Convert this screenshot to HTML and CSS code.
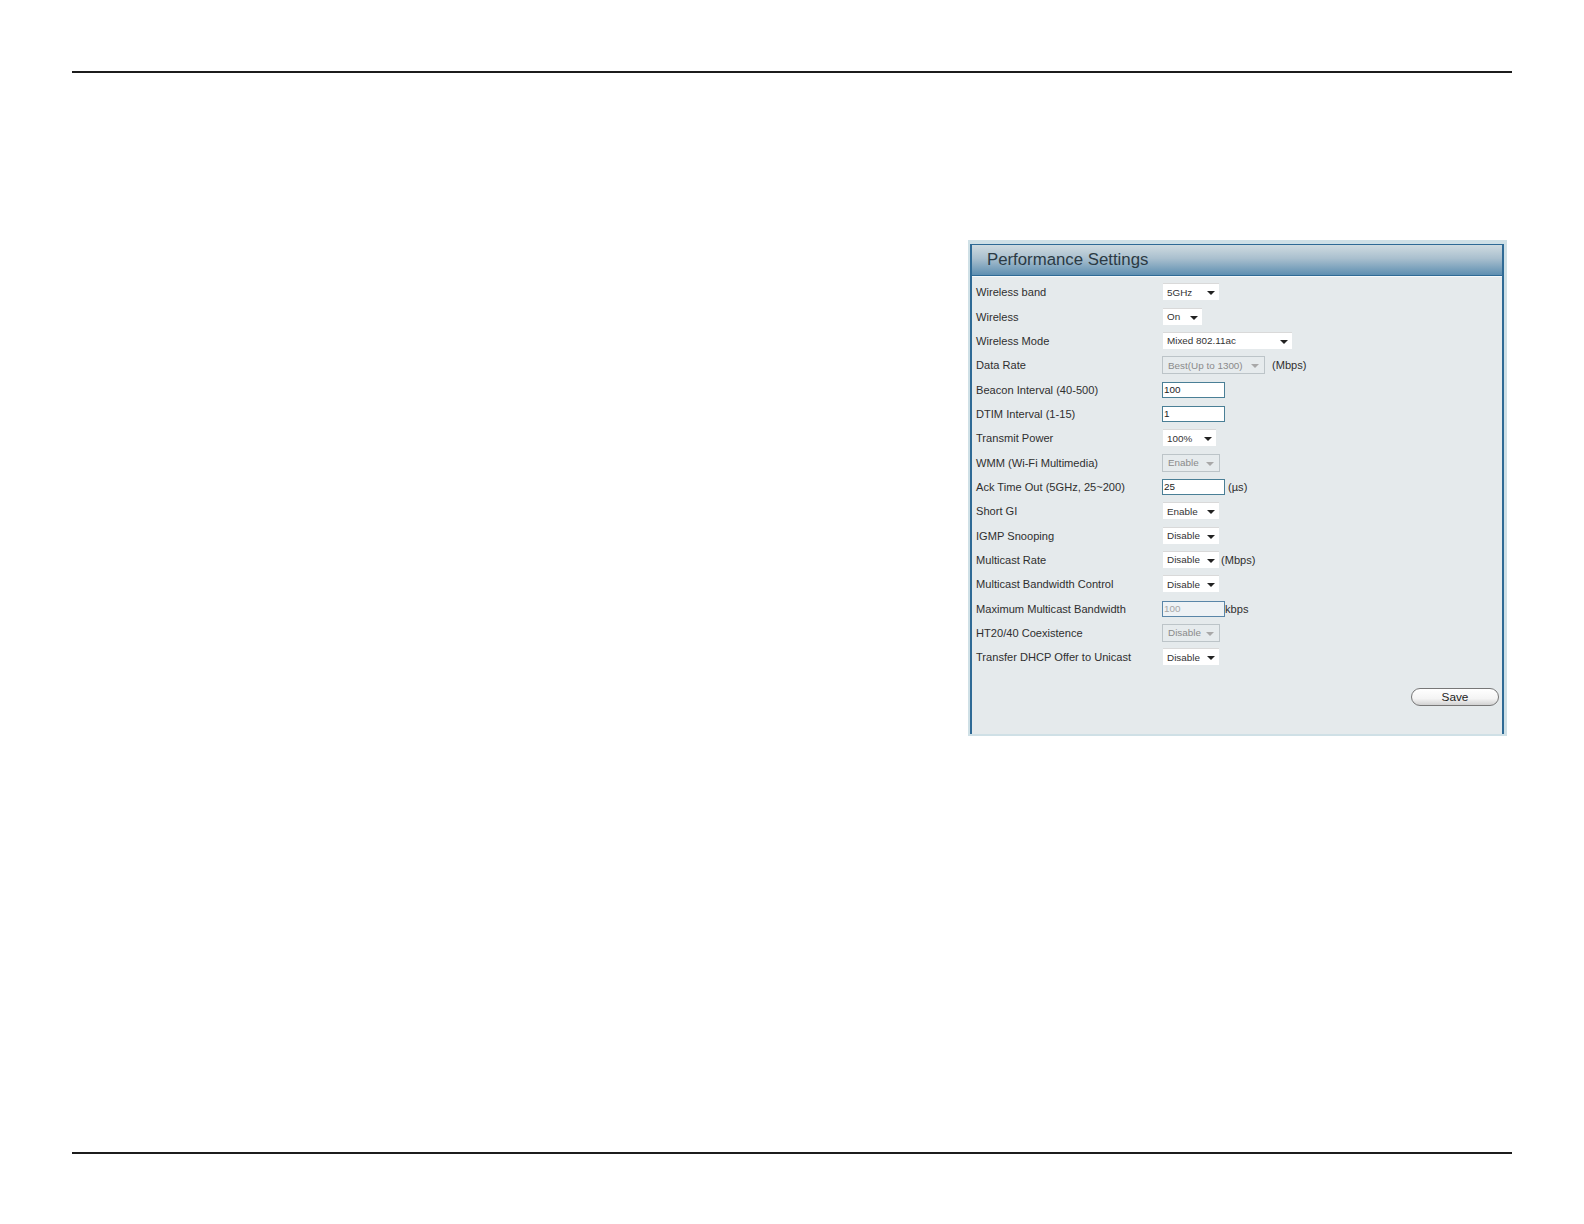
FILE: index.html
```html
<!DOCTYPE html>
<html lang="en">
<head>
<meta charset="utf-8">
<title>Performance Settings</title>
<link rel="stylesheet" href="styles.css">
</head>
<body>
<div class="page">
  <hr class="rule">
  <main class="content">
    <section class="panel">
      <div class="panel-inner">
        <h1 class="title">Performance Settings</h1>
        <div class="form">
          <div class="row"><span class="label">Wireless band</span><div class="field"><span class="select w57"><span class="val">5GHz</span><i class="arrow"></i></span></div></div>
          <div class="row"><span class="label">Wireless</span><div class="field"><span class="select w40"><span class="val">On</span><i class="arrow"></i></span></div></div>
          <div class="row"><span class="label">Wireless Mode</span><div class="field"><span class="select w130"><span class="val">Mixed 802.11ac</span><i class="arrow"></i></span></div></div>
          <div class="row"><span class="label">Data Rate</span><div class="field"><span class="select off w103"><span class="val">Best(Up to 1300)</span><i class="arrow"></i></span><span class="unit gap6">(Mbps)</span></div></div>
          <div class="row"><span class="label">Beacon Interval (40-500)</span><div class="field"><span class="input">100</span></div></div>
          <div class="row"><span class="label">DTIM Interval (1-15)</span><div class="field"><span class="input">1</span></div></div>
          <div class="row"><span class="label">Transmit Power</span><div class="field"><span class="select w54"><span class="val">100%</span><i class="arrow"></i></span></div></div>
          <div class="row"><span class="label">WMM (Wi-Fi Multimedia)</span><div class="field"><span class="select off w58"><span class="val">Enable</span><i class="arrow"></i></span></div></div>
          <div class="row"><span class="label">Ack Time Out (5GHz, 25~200)</span><div class="field"><span class="input">25</span><span class="unit gap3">(µs)</span></div></div>
          <div class="row"><span class="label">Short GI</span><div class="field"><span class="select w57"><span class="val">Enable</span><i class="arrow"></i></span></div></div>
          <div class="row"><span class="label">IGMP Snooping</span><div class="field"><span class="select w57"><span class="val">Disable</span><i class="arrow"></i></span></div></div>
          <div class="row"><span class="label">Multicast Rate</span><div class="field"><span class="select w57"><span class="val">Disable</span><i class="arrow"></i></span><span class="unit gap1">(Mbps)</span></div></div>
          <div class="row"><span class="label">Multicast Bandwidth Control</span><div class="field"><span class="select w57"><span class="val">Disable</span><i class="arrow"></i></span></div></div>
          <div class="row"><span class="label">Maximum Multicast Bandwidth</span><div class="field"><span class="input dim">100</span><span class="unit">kbps</span></div></div>
          <div class="row"><span class="label">HT20/40 Coexistence</span><div class="field"><span class="select off w58"><span class="val">Disable</span><i class="arrow"></i></span></div></div>
          <div class="row"><span class="label">Transfer DHCP Offer to Unicast</span><div class="field"><span class="select w57"><span class="val">Disable</span><i class="arrow"></i></span></div></div>
        </div>
        <div class="actions"><button class="save" type="button">Save</button></div>
      </div>
    </section>
  </main>
  <hr class="rule">
</div>
</body>
</html>
```
FILE: styles.css
```css
* { box-sizing: border-box; }
html, body { margin: 0; background: #fff; }
body { font-family: "Liberation Sans", Arial, sans-serif; color: #2f2f2f; }
.page { width: 1584px; height: 1224px; padding: 71px 72px 0 72px; }
.rule { margin: 0; height: 2px; border: 0; background: #1c1c1c; }
.content { height: 1079px; padding: 167px 5px 0 896px; }
.panel { width: 539px; height: 496px; background: #cfe0e6; padding: 4px 3px 2px 2px; }
.panel-inner {
  height: 100%;
  background: #e5eaec;
  border: 1px solid #2f6a95;
  border-width: 1px 2px 0 2px;
  display: flex;
  flex-direction: column;
}
.title {
  margin: 0;
  flex: none;
  height: 31px;
  padding: 4px 0 0 15px;
  font-size: 16.8px;
  line-height: 22px;
  font-weight: 400;
  color: #2b3a44;
  background: linear-gradient(#cfdbe0, #a9bfce 45%, #5e8fb1);
  border-bottom: 1px solid #2f6a95;
  box-shadow: 0 1px 0 #f4f8fa;
}
.form { padding: 4px 0 0 4px; display: grid; grid-auto-rows: 24.35px; }
.row { display: flex; align-items: center; font-size: 11.1px; }
.label { width: 187px; flex: none; }
.field { display: flex; align-items: center; }
.select {
  height: 17px;
  margin-bottom: 1px;
  display: flex;
  align-items: center;
  justify-content: space-between;
  background: #fff;
  padding: 0 4px 0 4px;
  font-size: 9.9px;
  color: #333;
  border-top: 1px solid #d9d9d9;
}
.select.off {
  height: 18px;
  margin-left: -1px;
  margin-bottom: 0;
  background: #e6ebed;
  border: 1px solid #bcc4c8;
  color: #8a8a8a;
  padding: 0 5px 0 5px;
}
.w40 { width: 39px; } .w54 { width: 53px; } .w57 { width: 56px; } .w58 { width: 58px; }
.w103 { width: 103px; } .w130 { width: 129px; }
.arrow {
  width: 0; height: 0;
  border: 4px solid transparent;
  border-top: 4px solid #222;
  border-bottom: 0;
  margin-top: 2px;
}
.off .arrow { border-top-color: #a8a8a8; }
.input {
  width: 63px;
  height: 16px;
  margin-left: -1px;
  padding-left: 1px;
  line-height: 14px;
  font-size: 9.9px;
  color: #222;
  background: #fff;
  border: 1px solid #4a7f96;
}
.input.dim { color: #a5a5a5; background: #eef2f5; border-color: #5a86a8; }
.unit { font-size: 11.1px; }
.gap6 { margin-left: 7px; } .gap3 { margin-left: 3px; } .gap1 { margin-left: 2px; }
.actions { display: flex; justify-content: flex-end; padding: 18px 3px 0 0; }
.save {
  width: 88px;
  height: 18px;
  padding: 0;
  font: 400 11.8px/16px "Liberation Sans", Arial, sans-serif;
  color: #222;
  background: linear-gradient(#fff, #f4f4f4 60%, #d2d2d2);
  border: 1px solid #777;
  border-radius: 9px;
}
```
